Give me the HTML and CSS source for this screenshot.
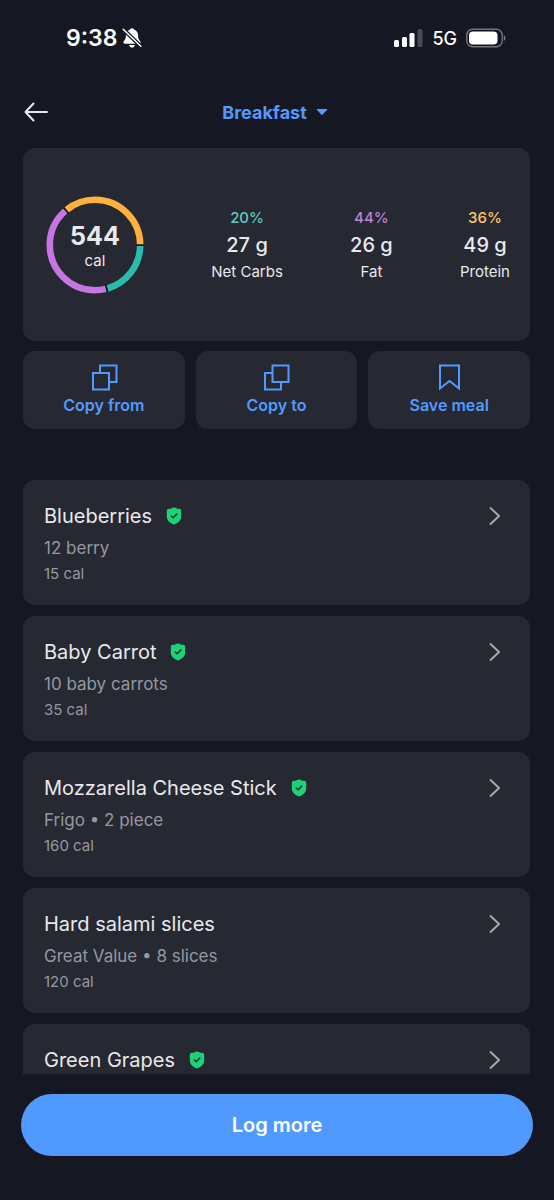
FILE: index.html
```html
<!DOCTYPE html>
<html lang="en">
<head>
<meta charset="utf-8">
<meta name="viewport" content="width=device-width, initial-scale=1">
<title>Breakfast</title>
<link rel="stylesheet" href="styles.css">
</head>
<body>
<svg class="symbols" aria-hidden="true">
  <symbol id="shield" viewBox="0 0 16 18">
    <path fill="#1bd277" d="M8 .4 Q8.5.4 9.2.8 Q11.5 2 14 2.1 Q15.2 2.200 15.200 3.400 V9.600 C15.200 13.800 11.500 16.400 8 17.600 C4.500 16.400.8 13.800.8 9.600 V3.400 Q.8 2.200 2 2.100 Q4.500 2 6.800.8 Q7.500.4 8 .4Z"/>
    <path fill="none" stroke="#16392f" stroke-width="1.500" d="M4.900 8.600 7.100 10.700 11.200 6.600"/>
  </symbol>
  <symbol id="chevron" viewBox="0 0 14 22">
    <path fill="none" stroke="#a9aab0" stroke-width="1.900" stroke-linecap="round" stroke-linejoin="round" d="M2.500 3 11 11 2.500 19"/>
  </symbol>
</svg>
<div class="app">
  <div class="status">
    <div class="status-side">
      <span class="time">9:38</span>
      <svg class="bell" viewBox="0 0 20 22" aria-label="Silent mode">
        <path fill="#fff" d="M10 1.200C11.300 1.200 12 2 12.200 2.700 15 3.500 16 5.800 16.100 8.500 16.200 11.500 16.700 12.600 18.200 14.300 19.100 15.500 18.500 16.800 17 16.800H3C1.500 16.800.9 15.500 1.800 14.300 3.300 12.600 3.800 11.500 3.900 8.500 4 5.800 5 3.500 7.800 2.700 8 2 8.700 1.200 10 1.200Z M7 18.100H13Q12.400 20.700 10 20.700T7 18.100Z"/>
        <path stroke="#151722" stroke-width="4" d="M0 1 20 20.500"/>
        <path stroke="#fff" stroke-width="1.500" stroke-linecap="round" d="M1.200 2.200 18.800 19.300"/>
      </svg>
    </div>
    <div class="status-side">
      <svg class="signal" viewBox="0 0 29 18" aria-label="Signal">
        <g fill="#fff"><rect y="11" width="5" height="7" rx="1.500"/><rect x="8" y="8" width="5" height="10" rx="1.500"/><rect x="15.500" y="4" width="5" height="14" rx="1.500"/></g>
        <rect x="23.500" width="5" height="18" rx="1.500" fill="#4a4b53"/>
      </svg>
      <span class="network">5G</span>
      <svg class="battery" viewBox="0 0 40 20" aria-label="Battery">
        <rect x=".8" y="1.300" width="35.400" height="17.400" rx="5.800" fill="none" stroke="#74757c" stroke-width="1.400"/>
        <rect x="3" y="3.500" width="28.500" height="13" rx="4" fill="#fff"/>
        <path fill="#74757c" d="M37.800 7Q39.600 7.800 39.600 10T37.800 13Z"/>
      </svg>
    </div>
  </div>
  <header class="header">
    <button class="back" aria-label="Back">
      <svg viewBox="0 0 24 20"><path fill="none" stroke="#e9e9ec" stroke-width="2" stroke-linecap="round" stroke-linejoin="round" d="M9.500 1.500 1.500 10 9.500 18.500M1.500 10H23"/></svg>
    </button>
    <button class="meal">Breakfast
      <svg viewBox="0 0 12 8"><path fill="#5499ff" d="M1.200 1H10.800Q11.800 1 11 1.900L6.700 6.600Q6 7.300 5.300 6.600L1 1.900Q.2 1 1.200 1Z"/></svg>
    </button>
  </header>
  <main class="content">
    <section class="card summary">
      <div class="ring">
        <svg viewBox="0 0 98 98" aria-hidden="true">
          <g fill="none" stroke-width="6.600">
            <circle cx="49" cy="49" r="45.200" pathLength="360" stroke="#2bbbad" stroke-dasharray="73 287" stroke-dashoffset="-1"/>
            <circle cx="49" cy="49" r="45.200" pathLength="360" stroke="#c576e3" stroke-dasharray="153 207" stroke-dashoffset="-76"/>
            <circle cx="49" cy="49" r="45.200" pathLength="360" stroke="#ffb13d" stroke-dasharray="129 231" stroke-dashoffset="-231"/>
            <g stroke="#151722" stroke-width="1.500"><path d="M90 49H98"/><path d="M90 49H98" transform="rotate(75 49 49)"/><path d="M90 49H98" transform="rotate(230 49 49)"/></g>
          </g>
        </svg>
        <div class="total"><strong>544</strong><span>cal</span></div>
      </div>
      <div class="macro"><span class="carbs">20%</span><b>27 g</b><span>Net Carbs</span></div>
      <div class="macro"><span class="fat">44%</span><b>26 g</b><span>Fat</span></div>
      <div class="macro"><span class="protein">36%</span><b>49 g</b><span>Protein</span></div>
    </section>
    <div class="actions">
      <button class="card action">
        <svg viewBox="0 0 28 28"><path d="M10 9.500V2.500H26.500V19H19.500M3 10H19V26.500H3Z"/></svg>Copy from
      </button>
      <button class="card action">
        <svg viewBox="0 0 28 28"><path d="M10.500 2.500H26.500V19H10.500ZM10 10H3V26.500H19V19.500"/></svg>Copy to
      </button>
      <button class="card action">
        <svg viewBox="0 0 28 28"><path d="M5 2.500H24V25.500L14.500 18 5 25.500Z"/></svg>Save meal
      </button>
    </div>
    <div class="foods">
      <a class="card food" href="#">
        <span class="food-title">Blueberries <svg class="shield"><use href="#shield"/></svg><svg class="chevron"><use href="#chevron"/></svg></span>
        <span class="food-detail">12 berry</span><span class="food-cal">15 cal</span>
      </a>
      <a class="card food" href="#">
        <span class="food-title">Baby Carrot <svg class="shield"><use href="#shield"/></svg><svg class="chevron"><use href="#chevron"/></svg></span>
        <span class="food-detail">10 baby carrots</span><span class="food-cal">35 cal</span>
      </a>
      <a class="card food" href="#">
        <span class="food-title">Mozzarella Cheese Stick <svg class="shield"><use href="#shield"/></svg><svg class="chevron"><use href="#chevron"/></svg></span>
        <span class="food-detail">Frigo • 2 piece</span><span class="food-cal">160 cal</span>
      </a>
      <a class="card food" href="#">
        <span class="food-title">Hard salami slices <svg class="chevron"><use href="#chevron"/></svg></span>
        <span class="food-detail">Great Value • 8 slices</span><span class="food-cal">120 cal</span>
      </a>
      <a class="card food" href="#">
        <span class="food-title">Green Grapes <svg class="shield"><use href="#shield"/></svg><svg class="chevron"><use href="#chevron"/></svg></span>
      </a>
    </div>
  </main>
  <footer class="footer"><button class="log">Log more</button></footer>
</div>
</body>
</html>
```

FILE: styles.css
```css
* { box-sizing: border-box; }
body {
  margin: 0;
  background: #151722;
  color: #e9e9ec;
  font-family: Inter, "Liberation Sans", sans-serif;
}
button {
  border: 0;
  padding: 0;
  background: none;
  font: inherit;
  cursor: pointer;
}
svg { display: block; flex: none; }
.symbols { position: absolute; width: 0; height: 0; }
.app { display: flex; flex-direction: column; height: 100vh; }

.status {
  display: flex;
  justify-content: space-between;
  align-items: center;
  height: 76px;
  flex: none;
  padding: 0 48px 0 66px;
  color: #fff;
}
.status-side { display: flex; align-items: center; }
.time { font-size: 23px; font-weight: 600; }
.bell { width: 20px; height: 22px; margin-left: 5px; }
.signal { width: 29px; height: 18px; margin-right: 9px; }
.network { font-size: 18px; font-weight: 500; }
.battery { width: 40px; height: 20px; margin-left: 9px; }

.header {
  display: grid;
  grid-template-columns: 1fr auto 1fr;
  align-items: center;
  height: 72px;
  flex: none;
  padding: 0 28px 0 24px;
}
.back { justify-self: start; }
.back svg { width: 24px; height: 20px; }
.meal {
  display: flex;
  align-items: center;
  gap: 9px;
  color: #5499ff;
  font-size: 18px;
  font-weight: 700;
}
.meal svg { width: 12px; height: 8px; }

.content { flex: 1; min-height: 0; overflow: hidden; padding: 0 24px 0 23px; }
.card { background: #262832; border-radius: 12px; }

.summary {
  display: flex;
  justify-content: space-between;
  align-items: center;
  height: 193px;
  padding: 0 20px 0 23px;
}
.ring { display: grid; place-items: center; width: 98px; }
.ring > * { grid-area: 1 / 1; }
.ring svg { width: 98px; height: 98px; }
.total {
  display: flex;
  flex-direction: column;
  align-items: center;
  padding-top: 2px;
  font-size: 15px;
  line-height: 20px;
}
.total strong { font-size: 25px; line-height: 30px; font-weight: 700; }
.macro {
  display: flex;
  flex-direction: column;
  align-items: center;
  font-size: 15px;
  line-height: 24px;
}
.macro b { font-size: 20px; line-height: 30px; font-weight: 500; }
.carbs, .fat, .protein { font-weight: 500; }
.carbs { color: #5ecdc2; }
.fat { color: #bd84d3; }
.protein { color: #ffc66b; }

.actions {
  display: grid;
  grid-template-columns: repeat(3, 1fr);
  gap: 11px;
  margin-top: 10px;
}
.action {
  display: flex;
  flex-direction: column;
  align-items: center;
  gap: 4px;
  padding: 12px 8px 14px;
  color: #5499ff;
  font-size: 16px;
  line-height: 20px;
  font-weight: 600;
}
.action svg { width: 28px; height: 28px; fill: none; stroke: #5499ff; stroke-width: 2; }

.foods { display: flex; flex-direction: column; gap: 11px; margin-top: 51px; }
.food {
  display: flex;
  flex-direction: column;
  padding: 22px 28px 21px 21px;
  color: #9698a0;
  text-decoration: none;
}
.food-title {
  display: flex;
  align-items: center;
  gap: 14px;
  color: #e9e9ec;
  font-size: 20px;
  line-height: 28px;
}
.shield { width: 16px; height: 18px; }
.chevron { width: 14px; height: 22px; margin-left: auto; }
.food-detail { margin-top: 6px; font-size: 17px; line-height: 24px; }
.food-cal { margin-top: 4px; font-size: 15px; line-height: 20px; }

.footer { flex: none; padding: 20px 21px 44px; }
.log {
  display: block;
  width: 100%;
  height: 62px;
  border-radius: 31px;
  background: #5099ff;
  color: #fff;
  font-size: 20px;
  font-weight: 600;
}
```
